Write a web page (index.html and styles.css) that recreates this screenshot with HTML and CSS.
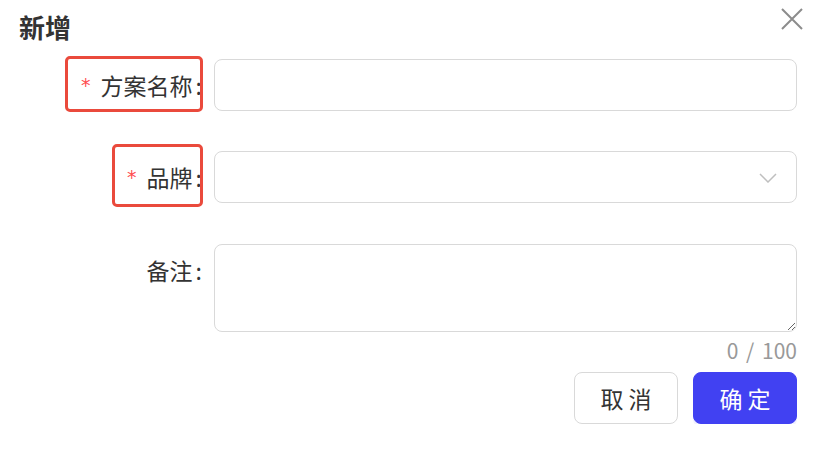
FILE: index.html
```html
<!DOCTYPE html>
<html lang="zh-CN">
<head>
  <meta charset="UTF-8">
  <meta name="viewport" content="width=device-width, initial-scale=1.0">
  <title>新增</title>
  <link rel="stylesheet" href="styles.css">
</head>
<body>
  <div class="modal">
    <div class="modal-header">
      <h2 class="modal-title">新增</h2>
      <button class="close-btn" aria-label="关闭">
        <svg width="22" height="22" viewBox="0 0 22 22">
          <path d="M1 1 L21 21 M21 1 L1 21" stroke="#8c8c8c" stroke-width="2" fill="none"/>
        </svg>
      </button>
    </div>

    <form class="form">
      <div class="form-row">
        <label class="form-label" for="planName">
          <span class="required">*</span>方案名称<span class="colon">:</span>
          <span class="mark mark-name"></span>
        </label>
        <div class="form-control">
          <input type="text" id="planName" class="input">
        </div>
      </div>

      <div class="form-row">
        <label class="form-label" for="brand">
          <span class="required">*</span>品牌<span class="colon">:</span>
          <span class="mark mark-brand"></span>
        </label>
        <div class="form-control">
          <div class="select" id="brand">
            <svg class="arrow" width="18" height="10" viewBox="0 0 18 10">
              <path d="M1 1 L9 9 L17 1" stroke="#bfbfbf" stroke-width="1.5" fill="none"/>
            </svg>
          </div>
        </div>
      </div>

      <div class="form-row form-row-top">
        <label class="form-label" for="remark">备注<span class="colon">:</span></label>
        <div class="form-control">
          <textarea id="remark" class="textarea"></textarea>
          <div class="count">0 / 100</div>
        </div>
      </div>

      <div class="form-footer">
        <button type="button" class="btn">取 消</button>
        <button type="submit" class="btn btn-primary">确 定</button>
      </div>
    </form>
  </div>
</body>
</html>
```

FILE: styles.css
```css
* {
  margin: 0;
  padding: 0;
  box-sizing: border-box;
  font-family: 'Noto Sans CJK SC', 'Noto Sans', sans-serif;
}

body {
  background: #fff;
  color: #333;
}

.modal {
  padding: 8px 20px 0 19px;
}

/* Header */
.modal-header {
  display: flex;
  justify-content: space-between;
  align-items: flex-start;
  height: 38px;
}

.modal-title {
  font-size: 26px;
  font-weight: bold;
  line-height: 38px;
  color: #333;
}

.close-btn {
  background: none;
  border: none;
  cursor: pointer;
  margin-right: -6px;
  line-height: 0;
}

/* Form */
.form {
  margin-top: 13px;
}

.form-row {
  display: flex;
  align-items: center;
  margin-bottom: 40px;
}

.form-row-top {
  align-items: flex-start;
  padding-top: 1px;
  margin-bottom: 6px;
}

.form-label {
  position: relative;
  display: flex;
  align-items: center;
  justify-content: flex-end;
  width: 195px;
  height: 52px;
  flex-shrink: 0;
  padding-right: 12px;
  font-size: 23px;
  color: #333;
  white-space: nowrap;
}

.colon {
  margin-left: 3px;
}

.required {
  color: #ff4d4f;
  font-size: 19px;
  margin-right: 10px;
  font-family: 'DejaVu Sans', sans-serif;
}

/* red annotation boxes */
.mark {
  position: absolute;
  border: 3px solid #ea4a3c;
  border-radius: 5px;
  right: 11px;
}

.mark-name {
  left: 46px;
  top: -3px;
  bottom: -1px;
}

.mark-brand {
  left: 93px;
  top: -7px;
  bottom: -4px;
}

.form-control {
  flex: 1;
}

.input,
.select,
.textarea {
  display: block;
  width: 100%;
  border: 1px solid #d9d9d9;
  border-radius: 8px;
  background: #fff;
  font-size: 20px;
}

.input {
  height: 52px;
  padding: 0 14px;
}

.select {
  position: relative;
  height: 52px;
}

.select .arrow {
  position: absolute;
  right: 19px;
  top: 21px;
}

.textarea {
  height: 88px;
  padding: 10px 14px;
}

.count {
  text-align: right;
  font-size: 21px;
  word-spacing: 3px;
  line-height: 32px;
  color: #999;
  margin-top: 2px;
}

/* Footer */
.form-footer {
  display: flex;
  justify-content: flex-end;
  gap: 15px;
}

.btn {
  width: 104px;
  height: 52px;
  border: 1px solid #d9d9d9;
  border-radius: 8px;
  background: #fff;
  font-size: 23px;
  color: #333;
  cursor: pointer;
}

.btn-primary {
  background: #4141f2;
  border-color: #4141f2;
  color: #fff;
  box-shadow: 0 3px 0 rgba(65, 65, 242, 0.08);
}
```
